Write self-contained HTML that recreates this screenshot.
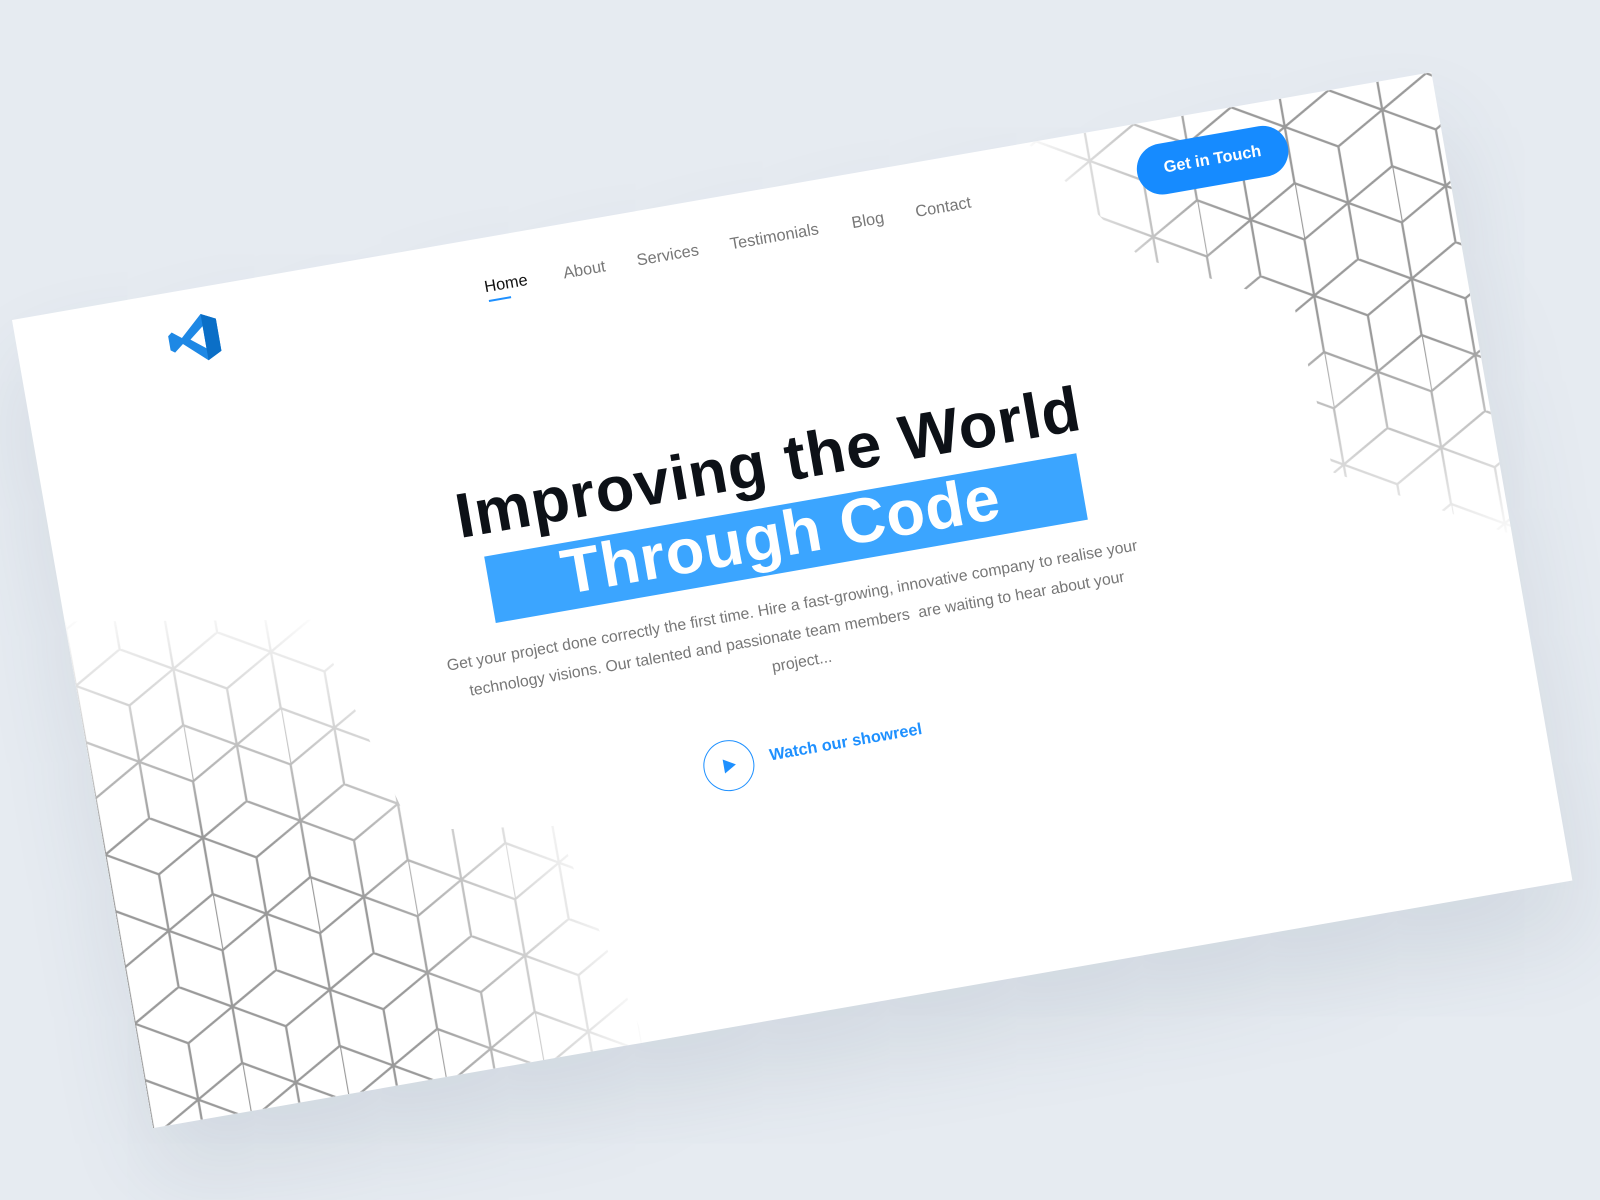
<!DOCTYPE html>
<html><head><meta charset="utf-8"><style>
html,body{margin:0;padding:0;width:1600px;height:1200px;overflow:hidden;background:#e6ebf1;font-family:"Liberation Sans",sans-serif}
#card{position:absolute;left:12px;top:320px;width:1412px;height:804px;background:#fff;transform-origin:0 0;transform:rotate(-9.9deg) scale(1.0204);box-shadow:0 50px 90px rgba(60,80,110,.12);overflow:hidden}
.nav{position:absolute;top:40px;font-size:16px;color:#777;transform:translateX(-50%);white-space:nowrap}
.nav.home{color:#111}
.nav.home:after{content:"";position:absolute;left:2px;bottom:-5px;width:22px;height:2px;background:#1e90ff}
.btn{position:absolute;left:1111px;top:23px;width:150px;height:50px;border-radius:25px;background:#168bff;color:#fff;font-size:16px;font-weight:bold;text-align:center;line-height:50px}
h1{position:absolute;margin:0;left:0;width:1412px;text-align:center;font-size:62px;font-weight:bold;color:#0d1117;letter-spacing:1px}
.box{position:absolute;left:416px;top:308px;width:589px;height:66px;background:#3ba5ff}
p{position:absolute;margin:0;left:305px;width:800px;top:394px;text-align:center;font-size:15.5px;line-height:28px;color:#777;white-space:nowrap}
.play{position:absolute;left:592px;top:526px;width:48px;height:48px;border:1.5px solid #1e90ff;border-radius:50%}
.play:after{content:"";position:absolute;left:19px;top:17px;border-left:12px solid #1e90ff;border-top:7px solid transparent;border-bottom:7px solid transparent}
.watch{position:absolute;left:658px;top:540px;font-size:16px;font-weight:bold;color:#1e90ff}
.cubes{position:absolute;left:0;top:0;width:1412px;height:804px}
</style></head><body>
<div id="card">
<svg class="cubes" width="1412" height="804">
<defs>
<pattern id="p" width="69.3" height="120" patternUnits="userSpaceOnUse" patternTransform="scale(1.4)">
<path d="M34.6 0L69.3 20L69.3 60L34.6 80L0 60L0 20Z M34.6 40L0 20 M34.6 40L69.3 20 M34.6 40L34.6 80 M34.6 80L34.6 120 M0 100L34.6 80 M69.3 100L34.6 80 M0 100L0 120 M0 0L0 20 M69.3 100L69.3 120 M69.3 0L69.3 20 M0 60L0 100" fill="none" stroke="#9a9a9a" stroke-width="1.6"/>
</pattern>
<radialGradient id="g1" cx="0.1" cy="0.9" r="0.9"><stop offset="0.5" stop-color="#fff"/><stop offset="1" stop-color="#fff" stop-opacity="0"/></radialGradient>
<radialGradient id="g2" cx="0.9" cy="0.1" r="0.9"><stop offset="0.5" stop-color="#fff"/><stop offset="1" stop-color="#fff" stop-opacity="0"/></radialGradient>
<mask id="m1"><rect x="0" y="290" width="500" height="514" fill="url(#g1)"/></mask>
<mask id="m2"><rect x="1000" y="0" width="412" height="470" fill="url(#g2)"/></mask>
</defs>
<polygon points="0,300 240,340 300,560 440,580 490,804 0,804" fill="url(#p)" mask="url(#m1)"/>
<polygon points="1010,0 1412,0 1412,460 1250,370 1240,200 1100,130" fill="url(#p)" mask="url(#m2)"/>
</svg>
<svg style="position:absolute;left:147px;top:24px" width="52" height="50" viewBox="0 0 52 50">
<path d="M36 2L50 9V41L36 48L14 28L5 35L1 32V18L5 15L14 22Z" fill="#1e88e5"/>
<path d="M36 14V36L22 25Z" fill="#fff"/>
<path d="M36 2L50 9V41L36 48Z" fill="#0b6fc7"/>
</svg>
<span class="nav home" style="left:483px">Home</span>
<span class="nav" style="left:561px">About</span>
<span class="nav" style="left:644px">Services</span>
<span class="nav" style="left:750px">Testimonials</span>
<span class="nav" style="left:843px">Blog</span>
<span class="nav" style="left:918px">Contact</span>
<div class="btn">Get in Touch</div>
<h1 style="top:230px">Improving the World</h1>
<div class="box"></div>
<h1 style="top:302px;color:#fff;left:0px">Through Code</h1>
<p>Get your project done correctly the first time. Hire a fast-growing, innovative company to realise your<br>technology visions. Our talented and passionate team members &nbsp;are waiting to hear about your<br>project...</p>
<div class="play"></div>
<div class="watch">Watch our showreel</div>
</div>
</body></html>
